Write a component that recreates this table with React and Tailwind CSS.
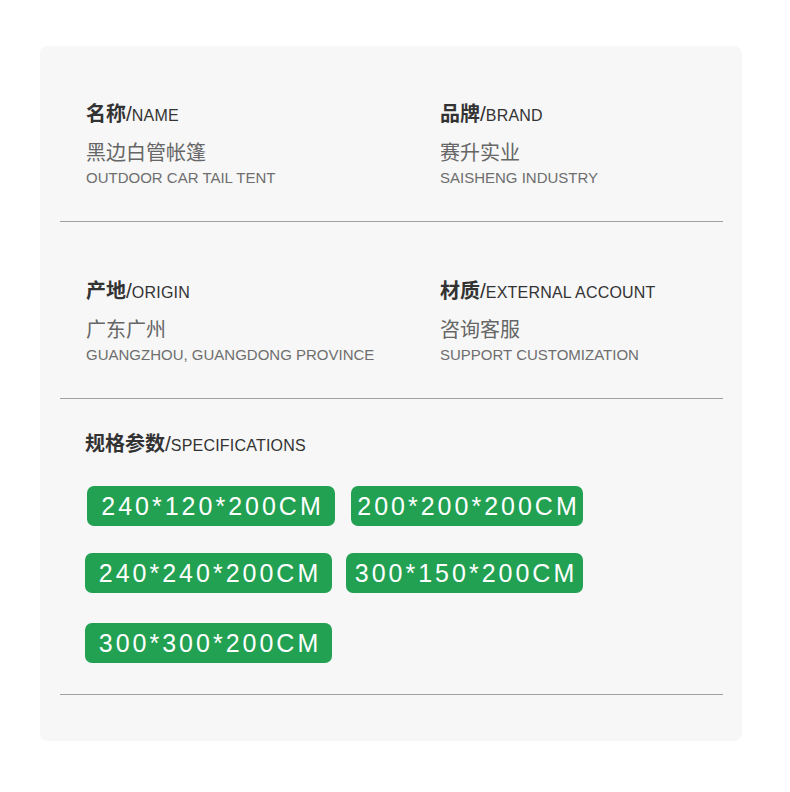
import React from "react";

const font = { fontFamily: '"Liberation Sans", "Noto Sans CJK SC", sans-serif' };

const info = [
  [
    { cn: "名称", en: "NAME", value: "黑边白管帐篷", sub: "OUTDOOR CAR TAIL TENT" },
    { cn: "品牌", en: "BRAND", value: "赛升实业", sub: "SAISHENG INDUSTRY" },
  ],
  [
    { cn: "产地", en: "ORIGIN", value: "广东广州", sub: "GUANGZHOU, GUANGDONG PROVINCE" },
    { cn: "材质", en: "EXTERNAL ACCOUNT", value: "咨询客服", sub: "SUPPORT CUSTOMIZATION" },
  ],
];

const sizes = [
  {
    row: "mt-[30px] gap-[16px] pl-[2px]",
    items: [
      { label: "240*120*200CM", w: "w-[248px]" },
      { label: "200*200*200CM", w: "w-[232px]" },
    ],
  },
  {
    row: "mt-[27px] gap-[14px]",
    items: [
      { label: "240*240*200CM", w: "w-[247px]" },
      { label: "300*150*200CM", w: "w-[237px]" },
    ],
  },
  {
    row: "mt-[30px] gap-[14px]",
    items: [{ label: "300*300*200CM", w: "w-[247px]" }],
  },
];

function Title({ cn, en }) {
  return (
    <div className="h-6 leading-6 text-[20px] text-[#333] whitespace-nowrap">
      <span className="font-bold">{cn}</span>
      <span className="text-[21px]">/</span>
      <span className="text-[16px] tracking-[0.2px]">{en}</span>
    </div>
  );
}

function Field({ cn, en, value, sub }) {
  return (
    <div>
      <Title cn={cn} en={en} />
      <div className="mt-[15px] h-6 leading-6 text-[20px] text-[#666]">{value}</div>
      <div className="mt-[4px] leading-[18px] text-[15px] text-[#6e6e6e] whitespace-nowrap">{sub}</div>
    </div>
  );
}

export default function App() {
  return (
    <div className="w-[790px] h-[792px] bg-white pt-[46px] px-[40px]" style={font}>
      <div className="w-[702px] h-[695px] rounded-lg bg-[#f7f7f7] pl-5 pr-[19px]">
        {info.map((pair, i) => (
          <div key={i}>
            <div className={`grid grid-cols-[354px_1fr] pl-[26px] pb-[34px] ${i === 0 ? "pt-[56px]" : "pt-[57px]"}`}>
              {pair.map((f) => (
                <Field key={f.cn} {...f} />
              ))}
            </div>
            <div className="h-px bg-[#a0a0a0]" />
          </div>
        ))}

        <div className="pl-[25px] pt-[33px] pb-[31px]">
          <Title cn="规格参数" en="SPECIFICATIONS" />
          {sizes.map((r, i) => (
            <div key={i} className={`flex ${r.row}`}>
              {r.items.map((s) => (
                <div
                  key={s.label}
                  className={`${s.w} h-10 leading-10 rounded-[7px] bg-[#22a153] pl-[3px] text-center text-white text-[25px] tracking-[3px] whitespace-nowrap`}
                >
                  {s.label}
                </div>
              ))}
            </div>
          ))}
        </div>
        <div className="h-px bg-[#a0a0a0]" />
      </div>
    </div>
  );
}
